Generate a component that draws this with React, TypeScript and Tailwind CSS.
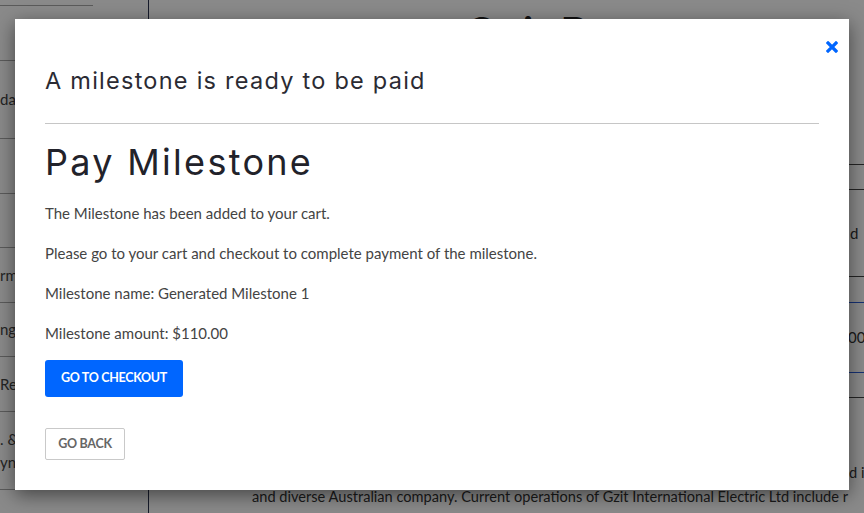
import React from "react";

const body = "font-['Lato','Liberation_Sans',sans-serif]";
const head = "font-['Inter','DejaVu_Sans',sans-serif]";

function SideRow({ h, text, two }: { h: string; text?: string; two?: string }) {
  return (
    <div className={`${h} border-b border-[#a9a9a9] flex flex-col justify-center text-[15px] leading-[23px] text-[#444]`}>
      {text && <span>{text}</span>}
      {two && <span>{two}</span>}
    </div>
  );
}

export default function App() {
  return (
    <div className={`relative w-[864px] h-[513px] overflow-hidden bg-white ${body}`}>
      {/* underlying page */}
      <div className="flex h-full">
        <div className="w-[110px] shrink-0 flex flex-col">
          <div className="h-[6px] w-[93px] border-b border-[#a9a9a9]" />
          <SideRow h="h-[55px]" />
          <SideRow h="h-[78px]" text="da" />
          <SideRow h="h-[55px]" />
          <SideRow h="h-[54px]" />
          <SideRow h="h-[55px]" text="rm" />
          <SideRow h="h-[54px]" text="ng" />
          <SideRow h="h-[55px]" text="Rev" />
          <SideRow h="h-[78px]" text=". &" two="yn" />
        </div>
        <div className="w-[38px] shrink-0" />
        <div className="flex-1 min-w-0 border-l border-[#2b3350] flex flex-col">
          <div className={`h-[145px] pt-[8px] pl-[316px] text-[44px] leading-[50px] text-[#222] ${head} font-medium`}>
            Gzit Power
          </div>
          <div className="border-b border-[#444] h-[20px]" />
          <div className="h-[25px] border-b border-[#444]" />
          <div className="h-[87px] border-b border-[#444] flex items-center pl-[701px] text-[15px] text-[#333]">d</div>
          <div className="h-[26px] border-b border-[#2a5bd7]" />
          <div className="h-[70px] border-b border-[#2a5bd7] flex items-center pl-[699px] text-[15px] text-[#333]">00</div>
          <div className="h-[25px] border-b border-[#444]" />
          <div className="flex-1 flex flex-col justify-end pl-[103px] pb-[4px] text-[14.6px] leading-[24px] text-[#333] whitespace-nowrap overflow-hidden">
            <div className="pl-[597px]">d i</div>
            <div>and diverse Australian company. Current operations of Gzit International Electric Ltd include r</div>
          </div>
        </div>
      </div>

      {/* overlay */}
      <div className="absolute inset-0 bg-[rgba(0,0,0,0.46)] pt-[19px] pl-[15px]">
        <div className="relative w-[834px] h-[471px] bg-white shadow-[0_5px_18px_rgba(0,0,0,0.5)] px-[30px]">
          <button className="absolute right-[11px] top-[22px] w-[12px] h-[12px] text-[#0066ff]">
            <svg viewBox="0 0 12 12" width="12" height="12">
              <path d="M2 2 L10 10 M10 2 L2 10" stroke="currentColor" strokeWidth="3.2" strokeLinecap="square" />
            </svg>
          </button>
          <h2 className={`pt-[47px] text-[23.5px] leading-[30px] text-[#2b2b33] ${head} font-normal tracking-[1.25px]`}>
            A milestone is ready to be paid
          </h2>
          <div className="mt-[27px] border-t border-[#c6c6c6]" />
          <h1 className={`mt-[17px] text-[36px] leading-[42px] text-[#22222a] ${head} font-normal tracking-[2.3px]`}>
            Pay Milestone
          </h1>
          <div className="mt-[20px] text-[15px] leading-[20px] text-[#444] flex flex-col gap-[20px]">
            <p>The Milestone has been added to your cart.</p>
            <p>Please go to your cart and checkout to complete payment of the milestone.</p>
            <p>Milestone name: Generated Milestone 1</p>
            <p>Milestone amount: $110.00</p>
          </div>
          <div className="mt-[17px] flex flex-col items-start gap-[31px]">
            <button className="h-[37px] w-[138px] rounded-[3px] bg-[#0066ff] text-white text-[12.5px] tracking-[-0.3px] font-bold">
              GO TO CHECKOUT
            </button>
            <button className="h-[32px] w-[80px] rounded-[2px] border border-[#c9c9c9] bg-white text-[#666] text-[12.5px] tracking-[-0.3px] font-bold">
              GO BACK
            </button>
          </div>
        </div>
      </div>
    </div>
  );
}
